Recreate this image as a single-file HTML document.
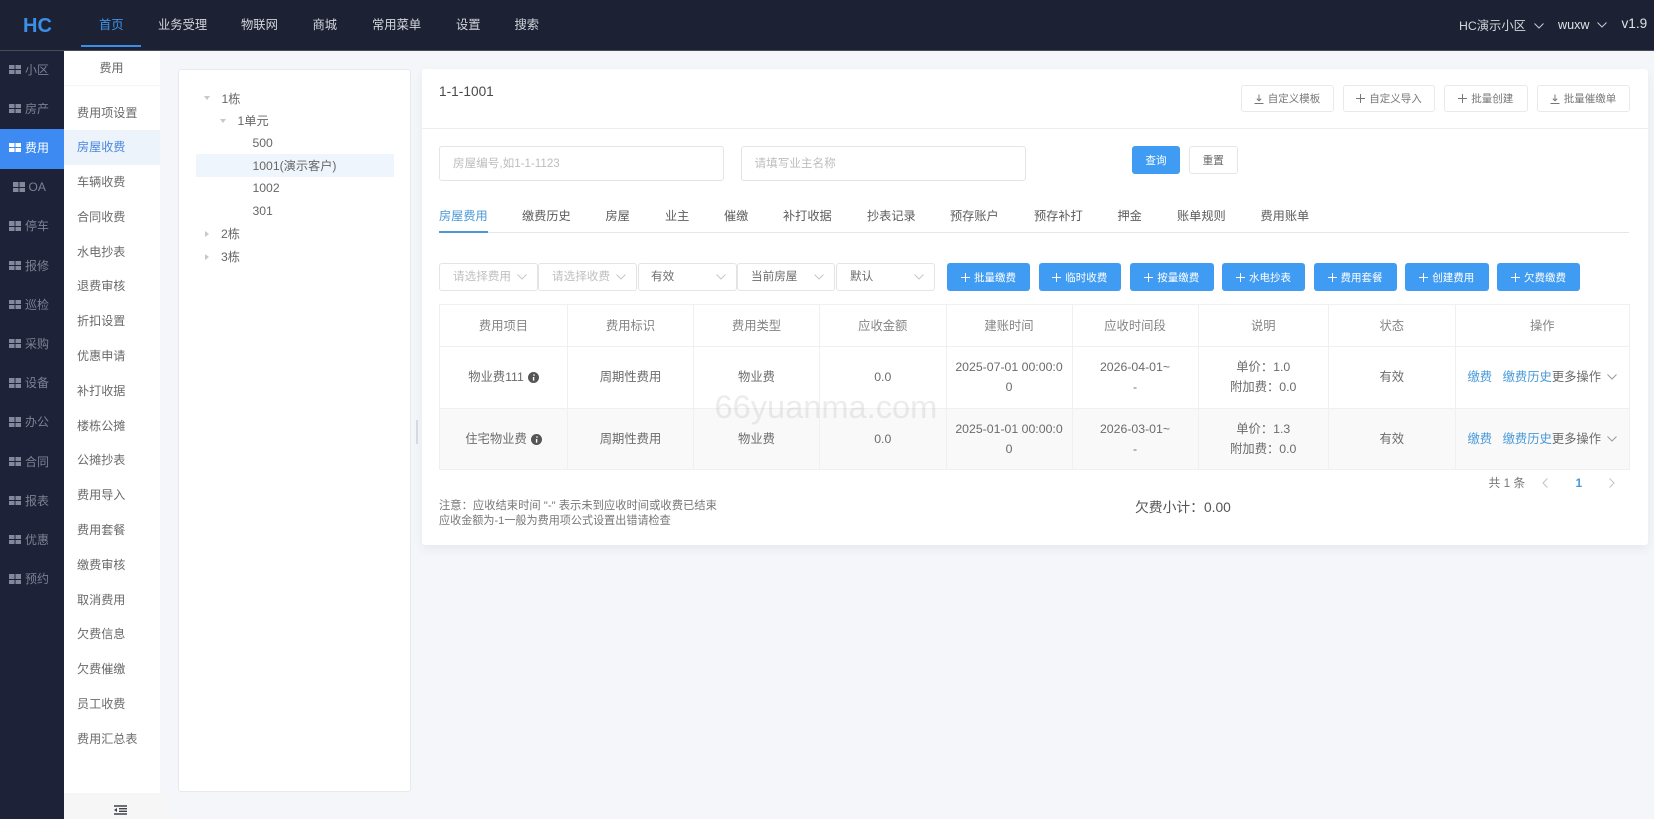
<!DOCTYPE html>
<html lang="zh">
<head>
<meta charset="utf-8">
<title>费用</title>
<style>
*{box-sizing:border-box}
html,body{margin:0;padding:0}
html{background:#f4f6fa}
body{width:1654px;height:819px;overflow:hidden;position:relative;background:#f4f6fa;font-family:"Liberation Sans","Noto Sans CJK SC",sans-serif;font-size:12.2px;color:#666;filter:blur(.3px)}
.a{position:absolute}
.t{position:absolute;white-space:nowrap;line-height:20px;height:20px}
svg{display:block;fill:none}
#hd{left:0;top:0;width:1654px;height:51px;background:#1c2133;border-bottom:1px solid #4a4d58}
#hd .t{top:15px;color:#d4d6dc;font-size:12.3px}
#side{left:0;top:51px;width:64px;height:768px;background:#1d2239}
.si{position:absolute;left:0;width:64px;height:39.2px;color:#7c8192;font-size:12px}
.si i{position:absolute;left:9px;top:13.5px;width:12px;height:9.5px;background:linear-gradient(90deg,transparent 5.5px,#1d2239 5.5px,#1d2239 6.5px,transparent 6.5px),linear-gradient(0deg,transparent 4.2px,#1d2239 4.2px,#1d2239 5.2px,transparent 5.2px),#83889a}
.si b{position:absolute;left:25px;top:8.5px;font-weight:400;line-height:20px;white-space:nowrap}
.si.on{background:#3d8bf2;color:#fff}
.si.on i{background:linear-gradient(90deg,transparent 5.5px,#3d8bf2 5.5px,#3d8bf2 6.5px,transparent 6.5px),linear-gradient(0deg,transparent 4.2px,#3d8bf2 4.2px,#3d8bf2 5.2px,transparent 5.2px),#fff}
#sub{left:64px;top:51px;width:96px;height:742px;background:#fff}
.mi{position:absolute;left:0;width:96px;height:34.8px;line-height:34.8px;padding-left:13px;color:#6a6a6a;font-size:12.1px;white-space:nowrap}
.mi.on{background:#edf3fb;color:#4a86dc}
.card{background:#fff;border:1px solid #e6e9ed;border-radius:3px}
.tr{position:absolute;line-height:20px;white-space:nowrap;color:#666;font-size:12.2px}
.btn{position:absolute;display:flex;align-items:center;justify-content:center;gap:4px;border-radius:3px;font-size:10.5px;white-space:nowrap}
.w{background:#fff;border:1px solid #e7e9ec;color:#777;top:85px;height:27px}
.b{background:#409cf2;color:#fff;top:263px;height:28px}
.inp{position:absolute;top:146px;height:34.5px;border:1px solid #e2e4e8;border-radius:3px;color:#bdbdbd;font-size:11.6px;line-height:33px;padding-left:13px;background:#fff}
.tab{top:206px;font-size:12.2px;color:#5c5c5c}
.sel{position:absolute;top:263px;height:27.5px;border:1px solid #e2e4e8;border-radius:3px;font-size:11.6px;line-height:26px;padding-left:13px;color:#6d6d6d;background:#fff;white-space:nowrap;overflow:hidden}
.sel.ph{color:#c0c0c0}
.sel svg{position:absolute;right:10px;top:10px}
table{position:absolute;left:439px;top:304px;width:1190px;border-collapse:collapse;table-layout:fixed;font-size:12.3px;color:#6b6b6b}
th,td{border:1px solid #eef0f2;text-align:center;font-weight:400;line-height:20px;padding:0}
th{height:42px;color:#858585}
td{height:61.7px}
tr.g td{background:#f9f9f9}
.ops{text-align:left;padding-left:12px;white-space:nowrap;position:relative}
.ops a{color:#4a9ad8}
.ops svg{position:absolute;right:12px;top:27px}
td svg{display:inline-block;vertical-align:-1.5px;margin-left:4px}
#wm{left:714.5px;top:386.5px;font-size:32.6px;line-height:40px;color:rgba(170,170,170,.22);white-space:nowrap;font-family:"Liberation Sans",sans-serif}
</style>
</head>
<body>
<div class="a" id="hd">
  <div class="t" style="left:23px;top:15px;color:#3c8fe8;font-size:20px;font-weight:700;line-height:22px;height:22px">HC</div>
  <div class="t" style="left:99px;color:#3f94ea">首页</div>
  <div class="a" style="left:81px;top:44.5px;width:60px;height:2px;background:#3a8ee6"></div>
  <div class="t" style="left:158px">业务受理</div>
  <div class="t" style="left:241px">物联网</div>
  <div class="t" style="left:312.5px">商城</div>
  <div class="t" style="left:372px">常用菜单</div>
  <div class="t" style="left:456px">设置</div>
  <div class="t" style="left:514.5px">搜索</div>
  <div class="t" style="left:1459px;top:16px">HC演示小区</div>
  <svg class="a" style="left:1534px;top:23px" width="10" height="6" stroke="#c8cad0"><path d="M.5.5l4.5 4.5 4.5-4.5"/></svg>
  <div class="t" style="left:1558px;top:15px;color:#e2e3e8;font-size:12.6px">wuxw</div>
  <svg class="a" style="left:1597px;top:22px" width="10" height="6" stroke="#c8cad0"><path d="M.5.5l4.5 4.5 4.5-4.5"/></svg>
  <div class="t" style="left:1621.5px;top:14px;color:#e2e3e8;font-size:13.6px">v1.9</div>
</div>

<div class="a" id="side" style="top:51px">
  <div class="si" style="top:0"><i></i><b>小区</b></div>
  <div class="si" style="top:39.2px"><i></i><b>房产</b></div>
  <div class="si on" style="top:78.4px"><i></i><b>费用</b></div>
  <div class="si" style="top:117.6px"><i style="left:12.5px"></i><b style="left:28.5px">OA</b></div>
  <div class="si" style="top:156.8px"><i></i><b>停车</b></div>
  <div class="si" style="top:196px"><i></i><b>报修</b></div>
  <div class="si" style="top:235.2px"><i></i><b>巡检</b></div>
  <div class="si" style="top:274.4px"><i></i><b>采购</b></div>
  <div class="si" style="top:313.6px"><i></i><b>设备</b></div>
  <div class="si" style="top:352.8px"><i></i><b>办公</b></div>
  <div class="si" style="top:392px"><i></i><b>合同</b></div>
  <div class="si" style="top:431.2px"><i></i><b>报表</b></div>
  <div class="si" style="top:470.4px"><i></i><b>优惠</b></div>
  <div class="si" style="top:509.6px"><i></i><b>预约</b></div>
</div>

<div class="a" id="sub">
  <div class="t" style="left:35.5px;top:7px;color:#666;font-size:12px">费用</div>
  <div class="a" style="left:0;top:34px;width:96px;height:1px;background:#f6f6f6"></div>
  <div class="mi" style="top:44.5px">费用项设置</div>
  <div class="mi on" style="top:79px">房屋收费</div>
  <div class="mi" style="top:114px">车辆收费</div>
  <div class="mi" style="top:148.8px">合同收费</div>
  <div class="mi" style="top:183.6px">水电抄表</div>
  <div class="mi" style="top:218.4px">退费审核</div>
  <div class="mi" style="top:253.2px">折扣设置</div>
  <div class="mi" style="top:288px">优惠申请</div>
  <div class="mi" style="top:322.8px">补打收据</div>
  <div class="mi" style="top:357.6px">楼栋公摊</div>
  <div class="mi" style="top:392.4px">公摊抄表</div>
  <div class="mi" style="top:427.2px">费用导入</div>
  <div class="mi" style="top:462px">费用套餐</div>
  <div class="mi" style="top:496.8px">缴费审核</div>
  <div class="mi" style="top:531.6px">取消费用</div>
  <div class="mi" style="top:566.4px">欠费信息</div>
  <div class="mi" style="top:601.2px">欠费催缴</div>
  <div class="mi" style="top:636px">员工收费</div>
  <div class="mi" style="top:670.8px">费用汇总表</div>
</div>
<div class="a" style="left:64px;top:793px;width:104px;height:26px;background:#f6f6f7"></div>
<svg class="a" style="left:114px;top:805px" width="13" height="10" stroke="#3f4248" stroke-width="1.4"><path d="M0 1h13M5 3.7h8M5 6.3h8M0 9h13"/><path d="M0 5l3-2v4z" fill="#3f4248" stroke="none"/></svg>

<div class="a card" style="left:178px;top:69px;width:233px;height:723px"></div>
<div class="a" style="left:195.5px;top:154px;width:198px;height:23px;background:#eff5fc"></div>
<svg class="a" style="left:204px;top:96px" width="6" height="4"><path d="M0 0h6L3 4z" fill="#c8c8c8"/></svg>
<svg class="a" style="left:219.5px;top:119px" width="6" height="4"><path d="M0 0h6L3 4z" fill="#c8c8c8"/></svg>
<svg class="a" style="left:205px;top:231px" width="4" height="6"><path d="M0 0v6l4-3z" fill="#c8c8c8"/></svg>
<svg class="a" style="left:205px;top:253.5px" width="4" height="6"><path d="M0 0v6l4-3z" fill="#c8c8c8"/></svg>
<div class="tr" style="left:221.5px;top:89px">1栋</div>
<div class="tr" style="left:237.5px;top:111px">1单元</div>
<div class="tr" style="left:252.5px;top:133px">500</div>
<div class="tr" style="left:252.5px;top:156px">1001(演示客户)</div>
<div class="tr" style="left:252.5px;top:178px">1002</div>
<div class="tr" style="left:252.5px;top:200.5px">301</div>
<div class="tr" style="left:221px;top:224px">2栋</div>
<div class="tr" style="left:221px;top:247px">3栋</div>
<div class="a" style="left:415.5px;top:420px;width:2px;height:24px;background:#d8dbe0"></div>

<div class="a" style="left:421.5px;top:69px;width:1226px;height:476px;background:#fff;border-radius:3px;box-shadow:0 4px 10px rgba(40,50,80,.07)"></div>
<div class="t" style="left:439px;top:82px;font-size:13.7px;color:#4a4a4a">1-1-1001</div>
<div class="a" style="left:421.5px;top:128px;width:1226px;height:1px;background:#eceef0"></div>

<div class="btn w" style="left:1240.5px;width:93px"><svg width="10" height="10" stroke="#777"><path d="M5 .5v6M2.8 4.6L5 6.8l2.2-2.2M.5 9.5h9"/></svg>自定义模板</div>
<div class="btn w" style="left:1343px;width:92px"><svg width="9" height="9" stroke="#777"><path d="M4.5 0v9M0 4.5h9"/></svg>自定义导入</div>
<div class="btn w" style="left:1444px;width:83.5px"><svg width="9" height="9" stroke="#777"><path d="M4.5 0v9M0 4.5h9"/></svg>批量创建</div>
<div class="btn w" style="left:1536.5px;width:93px"><svg width="10" height="10" stroke="#777"><path d="M5 .5v6M2.8 4.6L5 6.8l2.2-2.2M.5 9.5h9"/></svg>批量催缴单</div>

<div class="inp" style="left:439px;width:285px">房屋编号,如1-1-1123</div>
<div class="inp" style="left:740.5px;width:285px">请填写业主名称</div>
<div class="btn" style="left:1132px;top:146px;width:48px;height:28px;background:#409cf2;color:#fff;font-size:10.6px">查询</div>
<div class="btn" style="left:1189px;top:146px;width:48.5px;height:28px;background:#fff;border:1px solid #e4e6e9;color:#666;font-size:10.6px">重置</div>

<div class="t tab" style="left:439px;color:#4a9ad8">房屋费用</div>
<div class="t tab" style="left:522px">缴费历史</div>
<div class="t tab" style="left:605.5px">房屋</div>
<div class="t tab" style="left:665px">业主</div>
<div class="t tab" style="left:724px">催缴</div>
<div class="t tab" style="left:783px">补打收据</div>
<div class="t tab" style="left:867px">抄表记录</div>
<div class="t tab" style="left:950px">预存账户</div>
<div class="t tab" style="left:1034px">预存补打</div>
<div class="t tab" style="left:1117.5px">押金</div>
<div class="t tab" style="left:1177px">账单规则</div>
<div class="t tab" style="left:1260.5px">费用账单</div>
<div class="a" style="left:439px;top:232px;width:1190px;height:1px;background:#e4e6e9"></div>
<div class="a" style="left:439px;top:231px;width:49px;height:2px;background:#4a9ad8"></div>

<div class="sel ph" style="left:439px;width:99px">请选择费用<svg width="10" height="6" stroke="#c4c6ca"><path d="M.5.5L5 5 9.5.5"/></svg></div>
<div class="sel ph" style="left:538px;width:99px">请选择收费<svg width="10" height="6" stroke="#c4c6ca"><path d="M.5.5L5 5 9.5.5"/></svg></div>
<div class="sel" style="left:637.5px;width:99px;padding-left:12.5px">有效<svg width="10" height="6" stroke="#c4c6ca"><path d="M.5.5L5 5 9.5.5"/></svg></div>
<div class="sel" style="left:737px;width:98px">当前房屋<svg width="10" height="6" stroke="#c4c6ca"><path d="M.5.5L5 5 9.5.5"/></svg></div>
<div class="sel" style="left:836px;width:98.5px">默认<svg width="10" height="6" stroke="#c4c6ca"><path d="M.5.5L5 5 9.5.5"/></svg></div>

<div class="btn b" style="left:947px;width:83px"><svg width="9" height="9" stroke="#fff"><path d="M4.5 0v9M0 4.5h9"/></svg>批量缴费</div>
<div class="btn b" style="left:1038.5px;width:82.5px"><svg width="9" height="9" stroke="#fff"><path d="M4.5 0v9M0 4.5h9"/></svg>临时收费</div>
<div class="btn b" style="left:1130px;width:83.5px"><svg width="9" height="9" stroke="#fff"><path d="M4.5 0v9M0 4.5h9"/></svg>按量缴费</div>
<div class="btn b" style="left:1222px;width:83px"><svg width="9" height="9" stroke="#fff"><path d="M4.5 0v9M0 4.5h9"/></svg>水电抄表</div>
<div class="btn b" style="left:1313.5px;width:83px"><svg width="9" height="9" stroke="#fff"><path d="M4.5 0v9M0 4.5h9"/></svg>费用套餐</div>
<div class="btn b" style="left:1405px;width:83.5px"><svg width="9" height="9" stroke="#fff"><path d="M4.5 0v9M0 4.5h9"/></svg>创建费用</div>
<div class="btn b" style="left:1497px;width:83px"><svg width="9" height="9" stroke="#fff"><path d="M4.5 0v9M0 4.5h9"/></svg>欠费缴费</div>

<table>
<colgroup><col style="width:128px"><col style="width:126px"><col style="width:126px"><col style="width:126.5px"><col style="width:126px"><col style="width:126px"><col style="width:130.5px"><col style="width:126.5px"><col style="width:174.5px"></colgroup>
<tr><th>费用项目</th><th>费用标识</th><th>费用类型</th><th>应收金额</th><th>建账时间</th><th>应收时间段</th><th>说明</th><th>状态</th><th>操作</th></tr>
<tr>
<td>物业费111<svg width="11" height="11"><circle cx="5.5" cy="5.5" r="5.5" fill="#555"/><path d="M6 2.4v1.3M5.6 5v3.6" stroke="#fff" stroke-width="1.4"/></svg></td>
<td>周期性费用</td><td>物业费</td><td>0.0</td><td>2025-07-01 00:00:0<br>0</td><td>2026-04-01~<br>-</td><td>单价：1.0<br>附加费：0.0</td><td>有效</td>
<td class="ops"><a>缴费</a><a style="margin-left:10.5px">缴费历史</a>更多操作<svg width="10" height="6" stroke="#9a9a9a"><path d="M.5.5L5 5 9.5.5"/></svg></td>
</tr>
<tr class="g">
<td>住宅物业费<svg width="11" height="11"><circle cx="5.5" cy="5.5" r="5.5" fill="#555"/><path d="M6 2.4v1.3M5.6 5v3.6" stroke="#fff" stroke-width="1.4"/></svg></td>
<td>周期性费用</td><td>物业费</td><td>0.0</td><td>2025-01-01 00:00:0<br>0</td><td>2026-03-01~<br>-</td><td>单价：1.3<br>附加费：0.0</td><td>有效</td>
<td class="ops"><a>缴费</a><a style="margin-left:10.5px">缴费历史</a>更多操作<svg width="10" height="6" stroke="#9a9a9a"><path d="M.5.5L5 5 9.5.5"/></svg></td>
</tr>
</table>
<div class="a" id="wm">66yuanma.com</div>

<div class="t" style="left:1488.5px;top:473px;font-size:11.8px;color:#777">共 1 条</div>
<svg class="a" style="left:1542px;top:478px" width="6" height="10" stroke="#c0c2c6"><path d="M5.5.5L1 5l4.5 4.5"/></svg>
<div class="t" style="left:1575.5px;top:473px;font-size:12px;font-weight:700;color:#4a9ad8">1</div>
<svg class="a" style="left:1609px;top:478px" width="6" height="10" stroke="#c0c2c6"><path d="M.5.5L5 5 .5 9.5"/></svg>

<div class="t" style="left:439px;top:498.5px;font-size:11.3px;color:#777;line-height:15px;height:15px">注意：应收结束时间 "-" 表示未到应收时间或收费已结束</div>
<div class="t" style="left:439px;top:513.5px;font-size:11.1px;color:#777;line-height:15px;height:15px">应收金额为-1一般为费用项公式设置出错请检查</div>
<div class="t" style="left:1135px;top:498px;font-size:13.8px;color:#555">欠费小计：0.00</div>
</body>
</html>
